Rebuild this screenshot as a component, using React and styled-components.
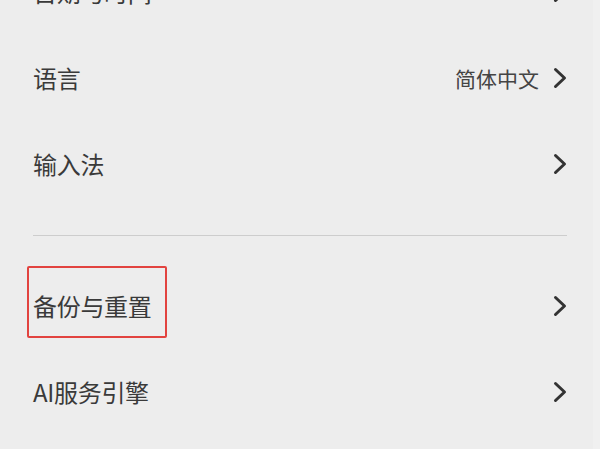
import React from "react";
import styled, { createGlobalStyle } from "styled-components";

const Global = createGlobalStyle`
  html, body { margin: 0; padding: 0; background: #f0f0f0; }
  body { font-family: "Noto Sans CJK SC", "Noto Sans", sans-serif; overflow: hidden; }
  #root { height: 449px; overflow: hidden; }
`;

const Screen = styled.div`
  width: 593px;
  height: 449px;
  background: #ededed;
  overflow: hidden;
`;

const List = styled.div`
  display: flex;
  flex-direction: column;
  margin-top: -51px;
`;

const Row = styled.div`
  height: 86px;
  display: flex;
  align-items: center;
  padding: 0 26px 0 33px;
  box-sizing: border-box;
`;

const Label = styled.span`
  font-size: 24px;
  line-height: 28px;
  font-weight: 400;
  color: #3a3a3a;
  flex: 1;
  letter-spacing: -0.3px;
`;

const Highlight = styled.span`
  display: inline-block;
  font-size: 24px;
  line-height: 28px;
  font-weight: 400;
  color: #3a3a3a;
  border: 2px solid #e2433f;
  border-radius: 2px;
  padding: 24px 13px 16px 4px;
  margin: -8px 0 0 -6px;
  letter-spacing: -0.3px;
`;

const Spacer = styled.span`
  flex: 1;
`;

const Value = styled.span`
  font-size: 21px;
  line-height: 28px;
  font-weight: 400;
  color: #444;
  margin-right: 14px;
`;

const Divider = styled.div`
  height: 56px;
  display: flex;
  align-items: center;
  padding: 0 26px 0 33px;
  box-sizing: border-box;
  &::after {
    content: "";
    flex: 1;
    height: 1px;
    background: #cdcdcd;
  }
`;

const Chevron = () => (
  <svg width="14" height="22" viewBox="0 0 14 22">
    <polyline
      points="2.5,2.5 11.5,11 2.5,19.5"
      fill="none"
      stroke="#333"
      strokeWidth="3"
      strokeLinecap="round"
      strokeLinejoin="round"
    />
  </svg>
);

export default function App() {
  return (
    <>
      <Global />
      <Screen>
        <List>
          <Row>
            <Label>日期与时间</Label>
            <Chevron />
          </Row>
          <Row>
            <Label>语言</Label>
            <Value>简体中文</Value>
            <Chevron />
          </Row>
          <Row>
            <Label>输入法</Label>
            <Chevron />
          </Row>
          <Divider />
          <Row>
            <Highlight>备份与重置</Highlight>
            <Spacer />
            <Chevron />
          </Row>
          <Row>
            <Label>AI服务引擎</Label>
            <Chevron />
          </Row>
        </List>
      </Screen>
    </>
  );
}
